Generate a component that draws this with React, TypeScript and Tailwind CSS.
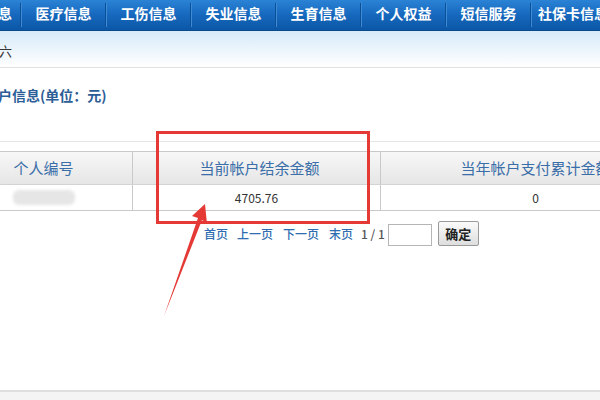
import React from 'react';

const navItems = ['医疗信息', '工伤信息', '失业信息', '生育信息', '个人权益', '短信服务'];

const font = { fontFamily: '"Noto Sans CJK SC", "Liberation Sans", sans-serif' };

const Sep = () => (
  <div className="flex shrink-0 h-[24px] self-center">
    <div className="w-px bg-[#0b4f97]" />
    <div className="w-px bg-[#3d8ad6]" />
  </div>
);

export default function App() {
  return (
    <div className="relative w-[600px] h-[400px] overflow-hidden bg-white" style={font}>
      {/* top nav */}
      <div className="h-[31px] flex items-stretch bg-gradient-to-b from-[#2b83d6] via-[#1668bd] to-[#0b57a6] border-b border-[#0a4a8c] text-white font-bold text-[14px] whitespace-nowrap">
        <div className="w-[20px] shrink-0 flex justify-end items-center overflow-hidden pr-[8px] pb-[3px]">
          <span className="shrink-0">养老信息</span>
        </div>
        {navItems.map((item) => (
          <React.Fragment key={item}>
            <Sep />
            <div className="w-[83px] shrink-0 flex items-center justify-center pb-[3px]">{item}</div>
          </React.Fragment>
        ))}
        <Sep />
        <div className="shrink-0 pl-[6px] pb-[3px] flex items-center">社保卡信息</div>
      </div>

      {/* date band */}
      <div className="h-[37px] bg-gradient-to-b from-[#d6eaf9] to-white border-b border-[#e2e2e2] flex items-center pt-[4px] text-[13px] text-[#333]">
        <span className="-ml-[1px]">六</span>
      </div>

      {/* title */}
      <div className="h-[73px] pt-[17px] leading-[20px] text-[14px] font-bold text-[#2c5d96] whitespace-nowrap">
        <span className="-ml-[2px]">户信息(单位：元)</span>
      </div>

      <div className="h-[10px] border-t border-[#e6e6e6]" />

      {/* table */}
      <div className="-ml-[45px] w-[735px] border-t border-b border-[#c9c9c9] whitespace-nowrap">
        <div className="grid grid-cols-[178px_248px_309px] h-[33px] bg-gradient-to-b from-[#f7f7f7] to-[#e6e6e6] border-b border-[#d3d3d3] text-[15px] text-[#3a6ea8]">
          <div className="flex items-center justify-center border-r border-[#c9c9c9]">个人编号</div>
          <div className="flex items-center justify-center border-r border-[#c9c9c9] pl-[6px]">当前帐户结余金额</div>
          <div className="flex items-center justify-center">当年帐户支付累计金额</div>
        </div>
        <div className="grid grid-cols-[178px_248px_309px] h-[25px] text-[12px] text-[#333]">
          <div className="flex items-center justify-center border-r border-[#c9c9c9]">
            <div className="w-[62px] h-[15px] rounded-[6px] bg-[#e6e6e6] blur-[1.5px]" />
          </div>
          <div className="flex items-center justify-center border-r border-[#c9c9c9]">4705.76</div>
          <div className="flex items-center justify-center">0</div>
        </div>
      </div>

      {/* pagination */}
      <div className="mt-[10px] ml-[204px] flex items-center h-[25px] text-[12px] font-medium whitespace-nowrap">
        <span className="text-[#2f6db0]">首页</span>
        <span className="text-[#2f6db0] ml-[9px]">上一页</span>
        <span className="text-[#2f6db0] ml-[10px]">下一页</span>
        <span className="text-[#2f6db0] ml-[10px]">末页</span>
        <span className="text-[#555] ml-[8px]">1 / 1</span>
        <div className="ml-[3px] w-[44px] h-[22px] border border-[#b5b5b5] bg-white mt-[2px]" />
        <button className="ml-[6px] w-[41px] h-[25px] border border-[#9a9a9a] rounded-[2px] bg-gradient-to-b from-[#fbfbfb] to-[#dedede] text-[13px] text-[#222] font-bold">
          确定
        </button>
      </div>

      {/* footer strip */}
      <div className="absolute left-0 right-0 bottom-0 h-[10px] border-t-2 border-[#dedede] bg-[#f4f4f4]" />

      {/* red annotation */}
      <svg className="absolute left-0 top-0 pointer-events-none" width="600" height="400">
        <rect x="157.5" y="132.5" width="211" height="90" fill="none" stroke="#e53935" strokeWidth="3" />
        <polygon points="205,204 192,216 198,218 164,316 202,220 207,224" fill="#e53935" />
      </svg>
    </div>
  );
}
